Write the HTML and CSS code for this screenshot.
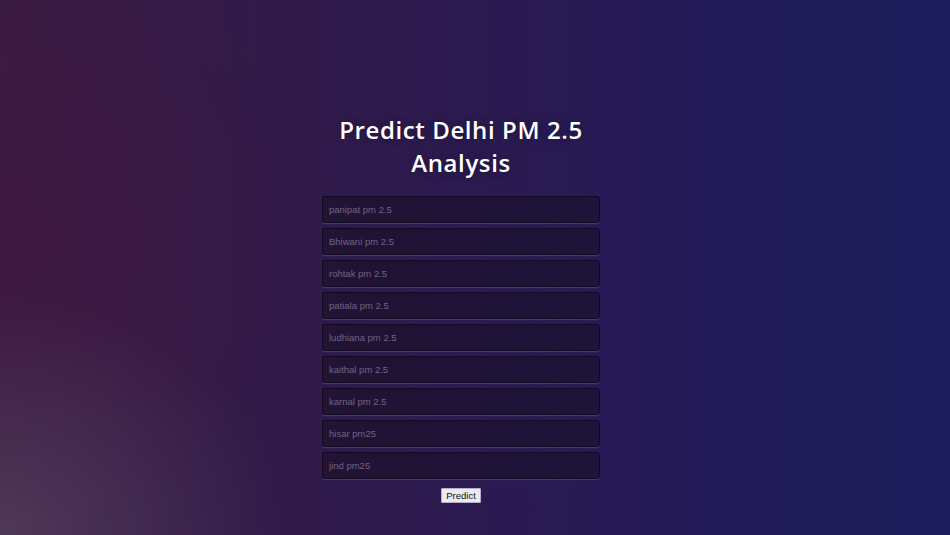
FILE: index.html
```html
<!DOCTYPE html>
<html>
<head>
<meta charset="utf-8">
<title>Predict Delhi PM 2.5</title>
<link rel="stylesheet" href="styles.css">
</head>
<body>
<div class="login">
  <h1>Predict Delhi PM 2.5 Analysis</h1>
  <form class="form">
    <input type="text" placeholder="panipat pm 2.5">
    <input type="text" placeholder="Bhiwani pm 2.5">
    <input type="text" placeholder="rohtak pm 2.5">
    <input type="text" placeholder="patiala pm 2.5">
    <input type="text" placeholder="ludhiana pm 2.5">
    <input type="text" placeholder="kaithal pm 2.5">
    <input type="text" placeholder="karnal pm 2.5">
    <input type="text" placeholder="hisar pm25">
    <input type="text" placeholder="jind pm25">
    <button type="button" class="btn">Predict</button>
  </form>
</div>
</body>
</html>
```
FILE: styles.css
```css
html, body {
  margin: 0;
  height: 100%;
}
body {
  font-family: "Open Sans", sans-serif;
  background-color: #2a1b52;
  background-image:
    radial-gradient(ellipse 30% 45% at 0% 100%, rgba(100, 85, 110, 0.5) 0%, rgba(100, 85, 110, 0) 100%),
    radial-gradient(ellipse 35% 55% at 0% 45%, rgba(70, 20, 60, 0.4) 0%, rgba(70, 20, 60, 0) 100%),
    linear-gradient(90deg, #3a1b42 0%, #311a4a 30%, #2a1a52 55%, #221b58 75%, #1c1e5c 100%);
  overflow: hidden;
}
.login {
  display: flex;
  flex-direction: column;
  align-items: center;
  padding-top: 113px;
  padding-right: 28px;
}
.login h1 {
  margin: 0 0 17px;
  width: 300px;
  text-align: center;
  color: #fff;
  font-family: "Open Sans", sans-serif;
  font-weight: 600;
  font-size: 24px;
  line-height: 33px;
  letter-spacing: 0.6px;
  text-shadow: 0 0 10px rgba(0, 0, 0, 0.3);
}
.form {
  display: flex;
  flex-direction: column;
  align-items: center;
  width: 278px;
}
.form input {
  box-sizing: border-box;
  width: 278px;
  height: 27px;
  margin: 0 0 5px;
  padding: 0 6px;
  background: rgba(10, 5, 20, 0.45);
  border: 1px solid rgba(0, 0, 0, 0.35);
  border-radius: 3px;
  outline: none;
  color: #fff;
  font-family: "Liberation Sans", Arial, sans-serif;
  font-size: 9.5px;
  box-shadow: inset 0 -5px 40px rgba(80, 70, 100, 0.12), 0 1px 1px rgba(140, 120, 200, 0.35);
}
.form input::placeholder {
  color: #6e6484;
}
.btn {
  margin-top: 4px;
  padding: 1px 4px;
  font-family: "Liberation Sans", Arial, sans-serif;
  font-size: 9.5px;
  line-height: 11px;
  color: #111;
  background: #ebe9f2;
  border: 1px solid #b5b0c8;
  border-radius: 1px;
}
```
